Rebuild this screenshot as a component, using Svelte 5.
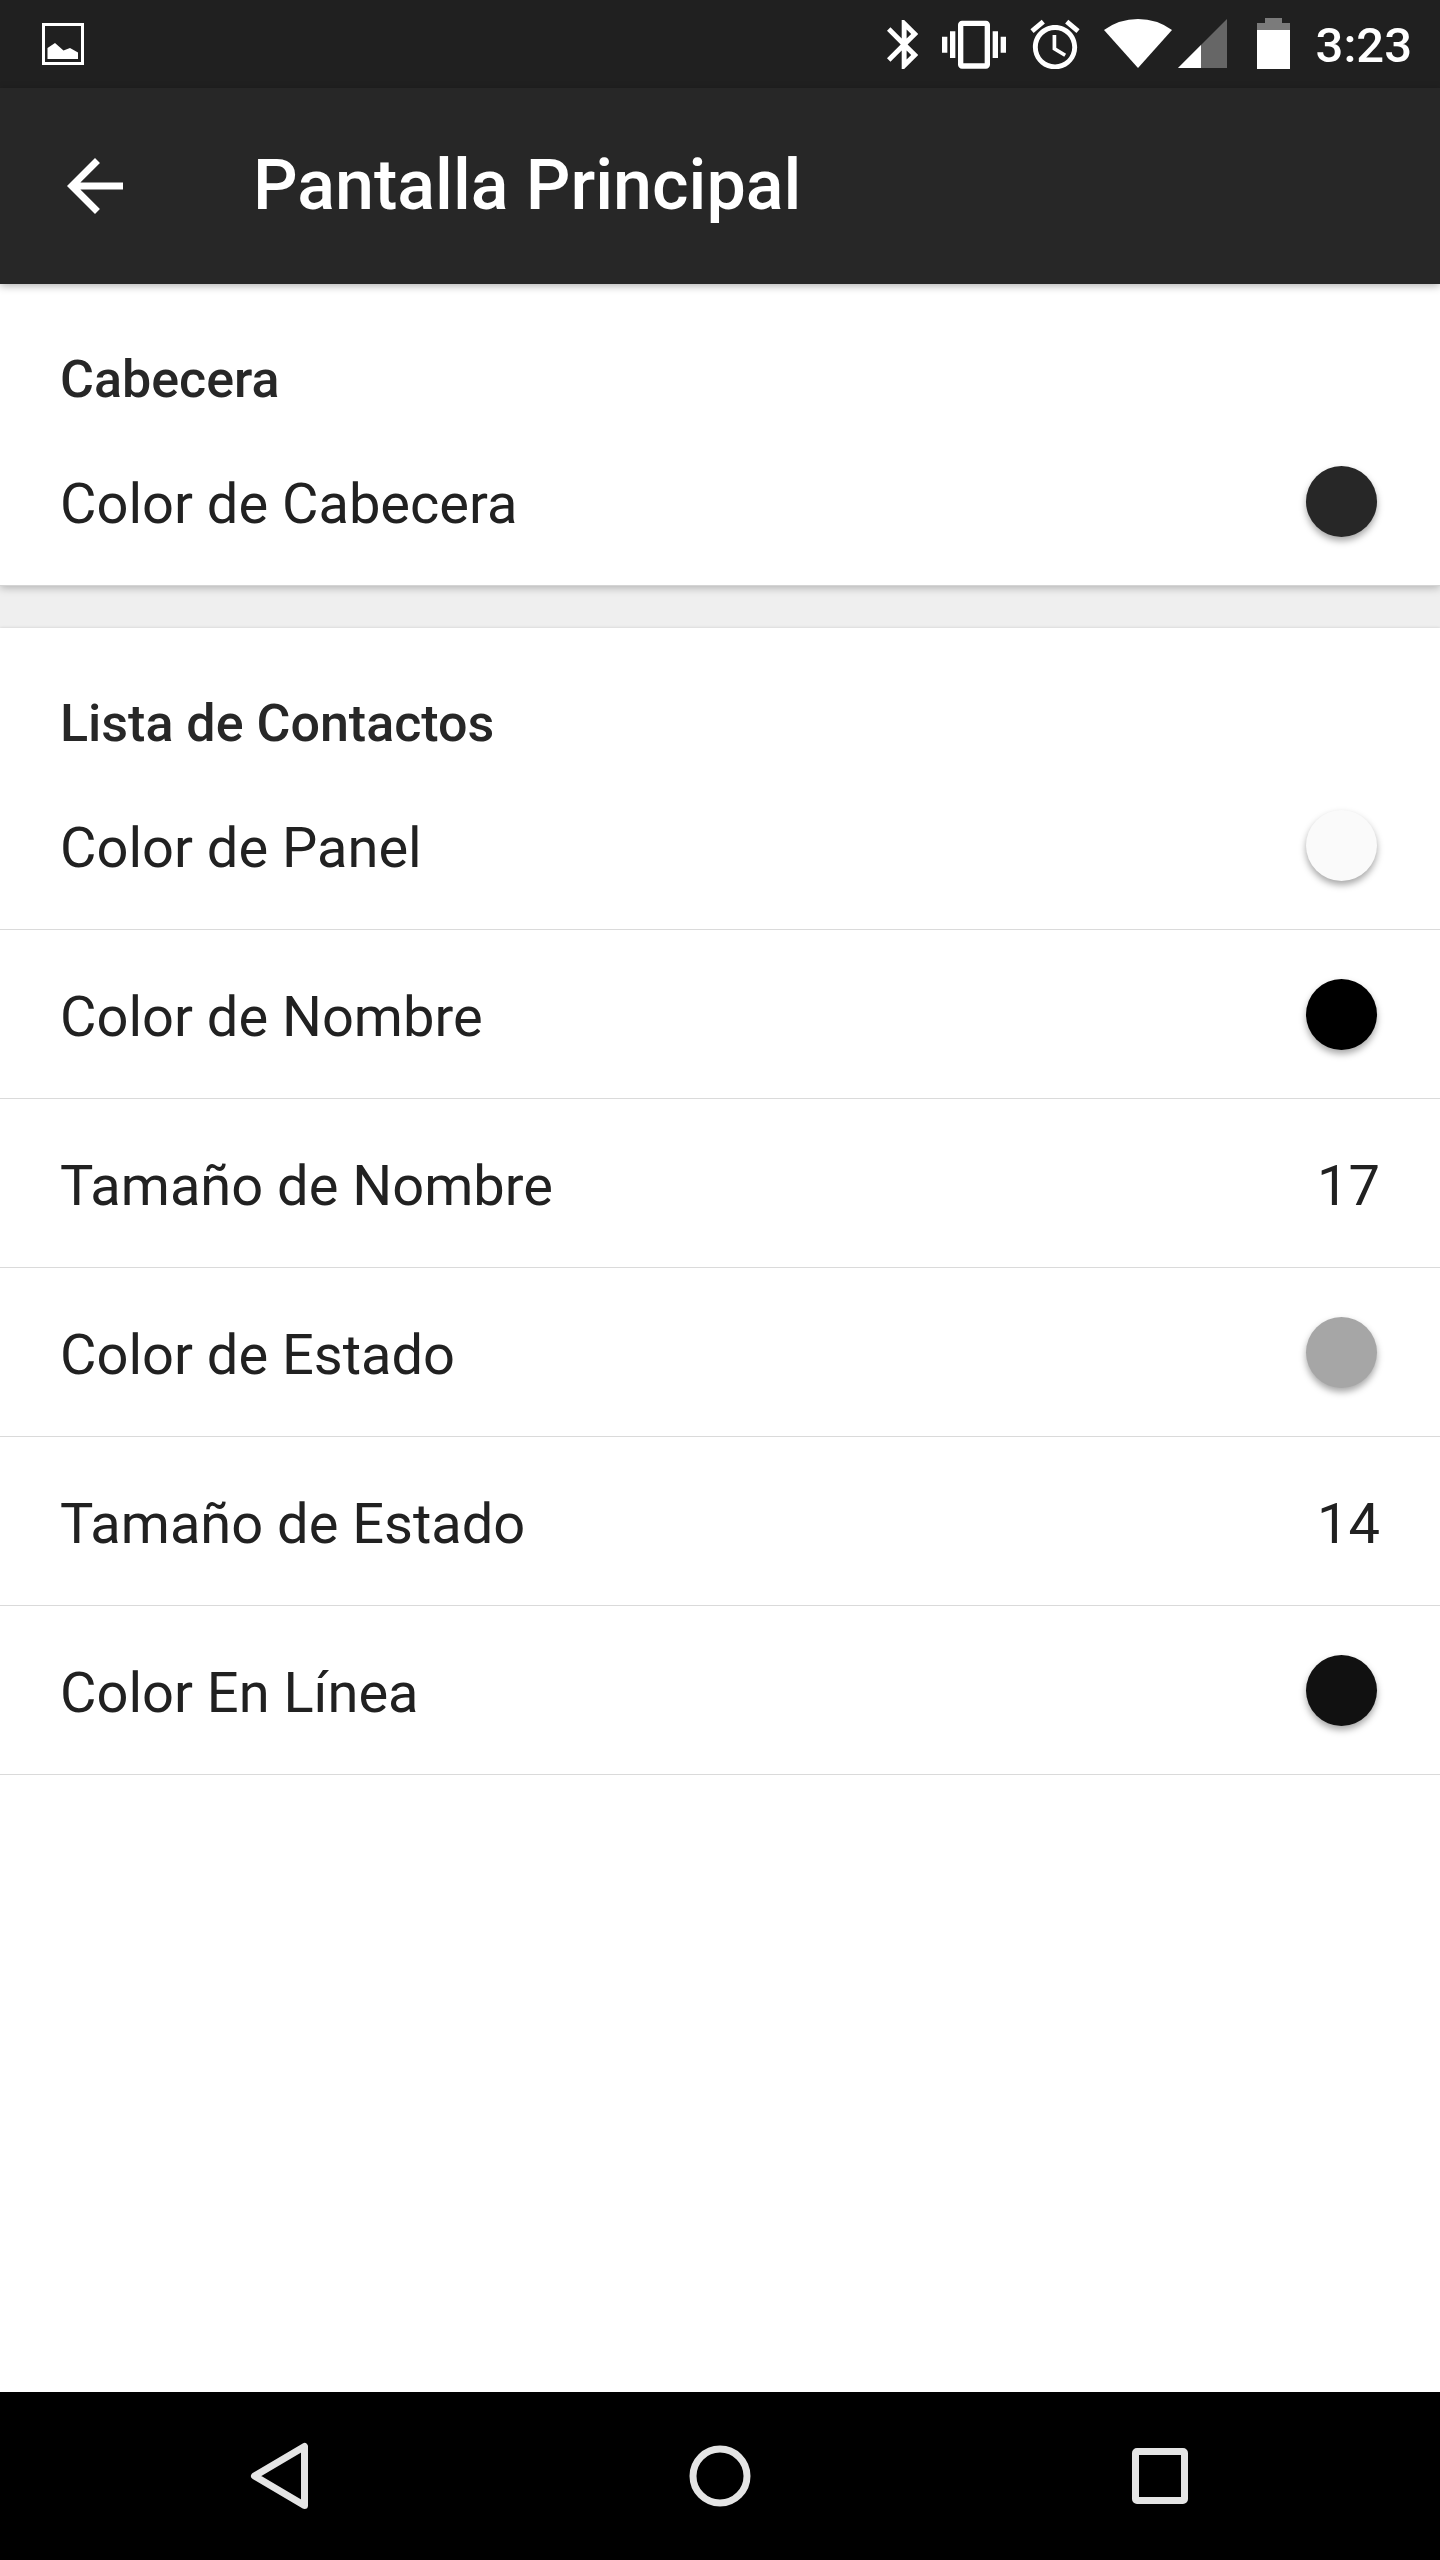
<script lang="ts">
  type Setting = { label: string; color?: string; value?: number };
  type Section = { title: string; settings: Setting[] };

  const sections: Section[] = [
    {
      title: 'Cabecera',
      settings: [{ label: 'Color de Cabecera', color: '#272727' }]
    },
    {
      title: 'Lista de Contactos',
      settings: [
        { label: 'Color de Panel', color: '#fafafa' },
        { label: 'Color de Nombre', color: '#000000' },
        { label: 'Tamaño de Nombre', value: 17 },
        { label: 'Color de Estado', color: '#a6a6a6' },
        { label: 'Tamaño de Estado', value: 14 },
        { label: 'Color En Línea', color: '#111111' }
      ]
    }
  ];
</script>

<div class="screen">
  <div class="status-bar">
    <svg width="42" height="42" viewBox="0 0 42 42" aria-hidden="true">
      <rect x="1.5" y="1.5" width="39" height="39" fill="none" stroke="#fff" stroke-width="3" />
      <path d="M5.5 36V25L13 20l8.500 7.500L28 25l8 4.500V36z" fill="#fff" />
    </svg>

    <div class="status-icons">
      <svg width="31" height="50" viewBox="0 0 31 50" aria-hidden="true">
        <path
          transform="translate(-12.25 -3.900) scale(2.45)"
          d="M17.710 7.710L12 2h-1v7.590L6.410 5 5 6.410 10.590 12 5 17.590 6.410 19 11 14.410V22h1l5.710-5.710-4.300-4.290 4.300-4.290zM13 5.830l1.880 1.880L13 9.590V5.830zm1.880 10.460L13 18.170v-3.760l1.880 1.880z"
          fill="#fff"
        />
      </svg>
      <svg width="64" height="50" viewBox="0 0 64 50" aria-hidden="true">
        <path
          transform="translate(0 -6.300) scale(2.6667)"
          d="M0 15h2V9H0v6zm3 2h2V7H3v10zm19-8v6h2V9h-2zm-3 8h2V7h-2v10zM16.500 3h-9C6.670 3 6 3.670 6 4.500v15c0 .83.67 1.500 1.500 1.500h9c.83 0 1.500-.67 1.500-1.500v-15c0-.83-.67-1.500-1.500-1.500zM16 19H8V5h8v14z"
          fill="#fff"
        />
      </svg>
      <svg width="50" height="50" viewBox="0 0 50 50" aria-hidden="true">
        <path
          transform="translate(-4.500 -3.800) scale(2.46)"
          d="M22 5.720l-4.600-3.860-1.290 1.530 4.600 3.860L22 5.720zM7.880 3.390L6.600 1.860 2 5.710l1.290 1.530 4.590-3.850zM12.500 8H11v6l4.750 2.850.75-1.230-4-2.370V8zM12 4c-4.970 0-9 4.030-9 9s4.020 9 9 9 9-4.030 9-9-4.030-9-9-9zm0 16c-3.870 0-7-3.130-7-7s3.130-7 7-7 7 3.130 7 7-3.130 7-7 7z"
          fill="#fff"
        />
      </svg>
      <div class="network">
        <svg width="68" height="50" viewBox="0 0 68 50" aria-hidden="true">
          <path d="M0 11Q15 0 34 0T68 11L34 49z" fill="#fff" />
        </svg>
        <svg width="49" height="50" viewBox="0 0 49 50" aria-hidden="true">
          <path d="M0 49L49 0v49z" fill="#666" />
          <path d="M0 49L23 26v23z" fill="#fff" />
        </svg>
      </div>
      <svg class="battery" width="33" height="52" viewBox="0 0 33 52" aria-hidden="true">
        <path d="M0 5h8V0h17v5h8v8H0z" fill="#7b7b7b" />
        <path d="M0 12h33v39H0z" fill="#fff" />
      </svg>
      <time class="clock">3:23</time>
    </div>
  </div>

  <header class="toolbar">
    <button class="back" aria-label="Atrás">
      <svg width="56" height="56" viewBox="4 4 16 16" aria-hidden="true">
        <path
          d="M20 11H7.830l5.590-5.590L12 4l-8 8 8 8 1.410-1.410L7.830 13H20z"
          fill="#fff"
        />
      </svg>
    </button>
    <h1>Pantalla Principal</h1>
  </header>

  <main>
    {#each sections as section}
      <section>
        <h2>{section.title}</h2>
        <ul>
          {#each section.settings as setting}
            <li>
              <button class="row">
                <span class="text">{setting.label}</span>
                {#if setting.color}
                  <span class="swatch" style="background: {setting.color}"></span>
                {:else}
                  <span class="text">{setting.value}</span>
                {/if}
              </button>
            </li>
          {/each}
        </ul>
      </section>
    {/each}
  </main>

  <nav>
    <button aria-label="Volver">
      <svg width="60" height="68" viewBox="0 0 60 68" aria-hidden="true">
        <path
          d="M4.500 34L54.500 4.500v59z"
          fill="none"
          stroke="#e4e4e4"
          stroke-width="7"
          stroke-linejoin="round"
        />
      </svg>
    </button>
    <button aria-label="Inicio">
      <svg width="62" height="62" viewBox="0 0 62 62" aria-hidden="true">
        <circle cx="31" cy="31" r="27" fill="none" stroke="#e4e4e4" stroke-width="7" />
      </svg>
    </button>
    <button aria-label="Recientes">
      <svg width="56" height="56" viewBox="0 0 56 56" aria-hidden="true">
        <path
          d="M5 0h46a5 5 0 0 1 5 5v46a5 5 0 0 1-5 5H5a5 5 0 0 1-5-5V5a5 5 0 0 1 5-5zM7 7v42h42V7z"
          fill="#e4e4e4"
          fill-rule="evenodd"
        />
      </svg>
    </button>
  </nav>
</div>

<style>
  :global(body) {
    margin: 0;
    background: #fff;
  }

  .screen {
    display: flex;
    flex-direction: column;
    min-height: 100vh;
    font-family: Roboto, 'Noto Sans', sans-serif;
    color: #212121;
  }

  svg {
    display: block;
    flex-shrink: 0;
  }

  button {
    padding: 0;
    border: 0;
    background: none;
    font: inherit;
    color: inherit;
    cursor: pointer;
  }

  .status-bar {
    display: flex;
    align-items: center;
    justify-content: space-between;
    height: 88px;
    padding: 0 28px 0 42px;
    background: #202020;
    color: #fff;
  }

  .status-icons {
    display: flex;
    align-items: center;
    gap: 24px;
  }

  .network {
    display: flex;
    gap: 6px;
  }

  .battery {
    margin: 0 2px 0 6px;
  }

  .clock {
    padding-top: 4px;
    font-size: 49px;
    font-weight: 500;
    line-height: 56px;
  }

  .toolbar {
    position: relative;
    z-index: 1;
    display: flex;
    align-items: center;
    gap: 130px;
    height: 196px;
    padding: 0 67px;
    background: #272727;
    box-shadow: 0 2px 8px rgba(0, 0, 0, 0.3);
    color: #fff;
  }

  h1 {
    margin: 0;
    padding-bottom: 2px;
    font-size: 70px;
    font-weight: 500;
    line-height: 82px;
  }

  main {
    display: flex;
    flex: 1;
    flex-direction: column;
    gap: 42px;
    background: #efefef;
  }

  section {
    background: #fff;
    border-bottom: 1px solid #d4d4d4;
    box-shadow: 0 2px 8px rgba(0, 0, 0, 0.25);
  }

  section:last-child {
    flex: 1;
    border-bottom: 0;
    box-shadow: 0 0 3px rgba(0, 0, 0, 0.15);
  }

  h2 {
    margin: 0;
    padding: 64px 60px 5px;
    font-size: 52px;
    font-weight: 500;
    line-height: 64px;
    color: #272727;
  }

  ul {
    margin: 0;
    padding: 0;
    list-style: none;
  }

  li {
    border-bottom: 1px solid #dadada;
  }

  section:first-child li {
    border-bottom: 0;
  }

  .row {
    display: flex;
    align-items: center;
    justify-content: space-between;
    width: 100%;
    height: 168px;
    padding: 0 60px;
    text-align: left;
  }

  .text {
    padding-top: 6px;
    font-size: 56px;
    line-height: 66px;
  }

  .swatch {
    width: 71px;
    height: 71px;
    margin-right: 3px;
    border-radius: 50%;
    box-shadow: 0 4px 7px rgba(0, 0, 0, 0.35);
  }

  nav {
    display: flex;
    height: 168px;
    padding: 0 60px;
    background: #000;
  }

  nav button {
    display: flex;
    flex: 1;
    align-items: center;
    justify-content: center;
  }
</style>
